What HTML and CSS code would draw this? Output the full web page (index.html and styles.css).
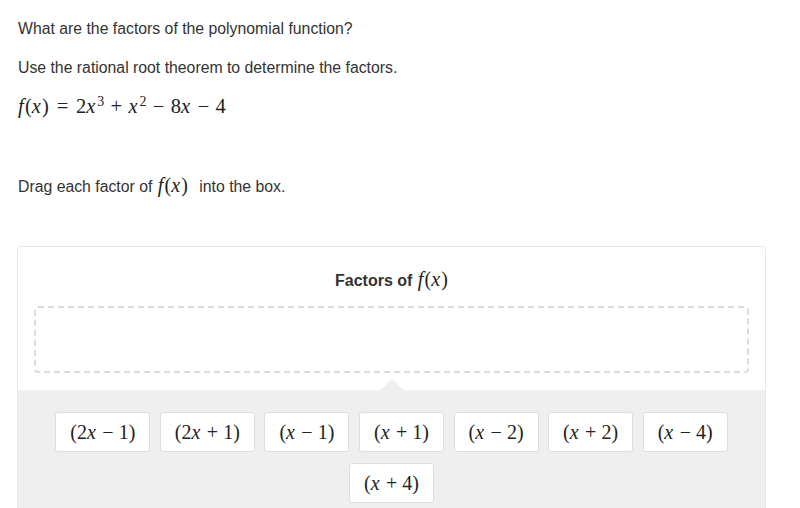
FILE: index.html
```html
<!DOCTYPE html>
<html>
<head>
<meta charset="utf-8">
<link rel="stylesheet" href="styles.css">
</head>
<body>
<main class="page">
  <p class="q q1">What are the factors of the polynomial function?</p>
  <p class="q q2">Use the rational root theorem to determine the factors.</p>
  <p class="formula math"><i>f</i>(<i>x</i>)<span class="rel">=</span>2<i>x</i><sup>3</sup><span class="bin">+</span><i>x</i><sup>2</sup><span class="bin">−</span>8<i>x</i><span class="bin">−</span>4</p>
  <p class="q q3">Drag each factor of <span class="math inl"><i>f</i>(<i>x</i>)</span> into the box.</p>

  <section class="card">
    <h2 class="card-title">Factors of <span class="math ttl"><i>f</i>(<i>x</i>)</span></h2>
    <div class="dropzone"></div>
    <div class="bank">
      <span class="notch"></span>
      <div class="tile math">(2<i>x</i><span class="bin">−</span>1)</div>
      <div class="tile math">(2<i>x</i><span class="bin">+</span>1)</div>
      <div class="tile math">(<i>x</i><span class="bin">−</span>1)</div>
      <div class="tile math">(<i>x</i><span class="bin">+</span>1)</div>
      <div class="tile math">(<i>x</i><span class="bin">−</span>2)</div>
      <div class="tile math">(<i>x</i><span class="bin">+</span>2)</div>
      <div class="tile math">(<i>x</i><span class="bin">−</span>4)</div>
      <div class="tile math">(<i>x</i><span class="bin">+</span>4)</div>
    </div>
  </section>
</main>
</body>
</html>
```

FILE: styles.css
```css
html, body {
  margin: 0;
  padding: 0;
  background: #ffffff;
}

body {
  font-family: "Liberation Sans", Arial, sans-serif;
  font-size: 15.8px;
  color: #333333;
  overflow: hidden;
  height: 508px;
}

.page {
  padding: 0 34px 0 17px;
}

.q {
  margin: 0;
  line-height: 20px;
  padding-left: 1px;
}

.q1 { padding-top: 19px; }
.q2 { margin-top: 19px; }

.math {
  font-family: "Liberation Serif", "Times New Roman", serif;
  color: #222222;
}

.math i {
  font-style: italic;
  padding-right: 0.06em;
}

.math sup {
  font-size: 0.68em;
  vertical-align: 0;
  position: relative;
  top: -0.5em;
  line-height: 0;
  padding-left: 0.05em;
}

.bin {
  margin: 0 0.31em;
}

.rel {
  margin: 0 0.38em;
}

.formula {
  margin: 16px 0 0 0;
  padding-left: 1px;
  font-size: 20.5px;
  line-height: 24px;
}

.q3 {
  margin-top: 57px;
}

.inl {
  font-size: 20px;
  margin-right: 7px;
  margin-left: 1px;
}

.card {
  margin-top: 49px;
  border: 1px solid #e8e8e8;
  border-radius: 4px;
  background: #ffffff;
  height: 300px;
}

.card-title {
  margin: 22px 0 0 0;
  text-align: center;
  font-size: 16px;
  font-weight: bold;
  line-height: 20px;
  color: #333333;
}

.ttl {
  font-size: 20px;
  font-weight: normal;
  margin-left: 1px;
}

.dropzone {
  margin: 15px 16px 0 16px;
  height: 63px;
  border: 2px dashed #dcdcdc;
  border-radius: 4px;
}

.bank {
  position: relative;
  margin-top: 17px;
  background: #efefef;
  padding: 22px 30px 20px 30px;
  display: flex;
  flex-wrap: wrap;
  justify-content: center;
  gap: 11px 9.5px;
  height: 200px;
  align-content: flex-start;
}

.notch {
  position: absolute;
  left: 50%;
  top: -11px;
  margin-left: -12px;
  width: 0;
  height: 0;
  border-left: 12px solid transparent;
  border-right: 12px solid transparent;
  border-bottom: 11px solid #efefef;
}

.tile {
  box-sizing: border-box;
  height: 40px;
  padding: 0 14px;
  min-width: 85px;
  display: flex;
  align-items: center;
  justify-content: center;
  background: #ffffff;
  border: 1px solid #dedede;
  border-radius: 3px;
  font-size: 20px;
  color: #222222;
}

.tile .bin {
  margin: 0 0.26em;
}
```
